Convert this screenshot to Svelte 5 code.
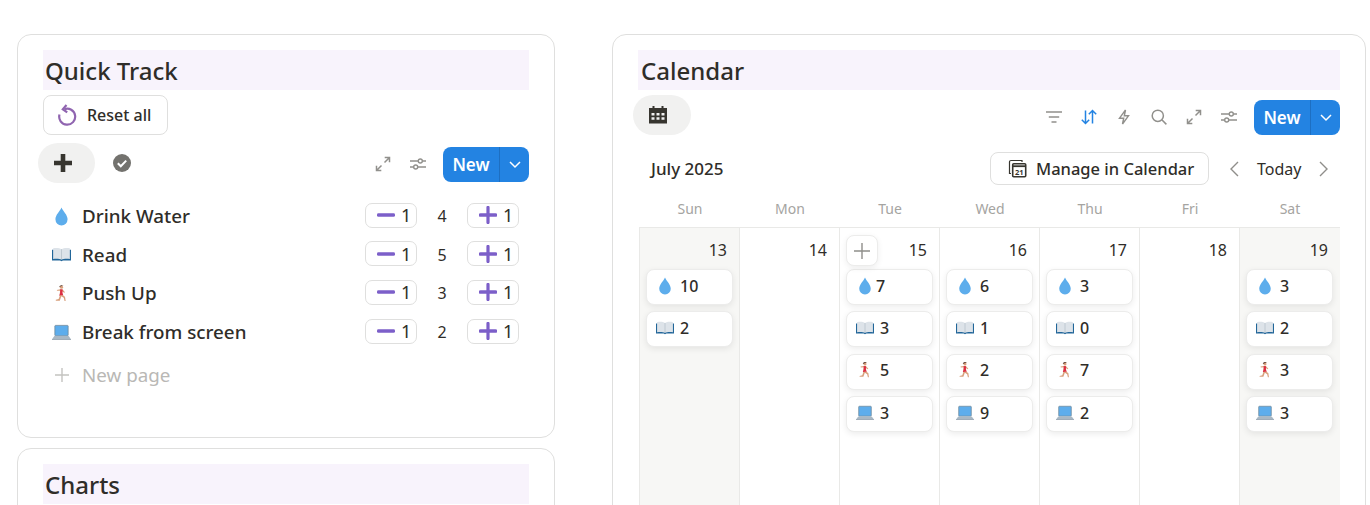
<script>
  const habits = [
    { icon: "drop", name: "Drink Water", count: 4 },
    { icon: "book", name: "Read", count: 5 },
    { icon: "runner", name: "Push Up", count: 3 },
    { icon: "laptop", name: "Break from screen", count: 2 }
  ];

  const weekdays = ["Sun", "Mon", "Tue", "Wed", "Thu", "Fri", "Sat"];

  const days = [
    { date: 13, weekend: true, items: [["drop", 10], ["book", 2]] },
    { date: 14, items: [] },
    { date: 15, add: true, items: [["drop", 7, true], ["book", 3], ["runner", 5], ["laptop", 3]] },
    { date: 16, items: [["drop", 6], ["book", 1], ["runner", 2], ["laptop", 9]] },
    { date: 17, items: [["drop", 3], ["book", 0], ["runner", 7], ["laptop", 2]] },
    { date: 18, items: [] },
    { date: 19, weekend: true, items: [["drop", 3], ["book", 2], ["runner", 3], ["laptop", 3]] }
  ];
</script>

{#snippet emoji(kind)}
  <svg class="emoji" viewBox="0 0 20 20">
    {#if kind === "drop"}
      <path d="M10 .5C8.400 4.500 3.600 8.200 3.600 13a6.400 6.400 0 0 0 12.800 0C16.400 8.200 11.600 4.500 10 .5z" fill="#5dadec" />
    {:else if kind === "book"}
      <path d="M0 5h20v11.200H11.500l-1.500.8-1.500-.8H0z" fill="#226699" />
      <path d="M1.200 3.500c3.300-.6 6.800-.4 8.800 1 2-1.400 5.500-1.600 8.800-1v11.200c-3.300-.5-6.800-.3-8.800.6-2-.9-5.500-1.100-8.800-.6z" fill="#dde3e9" />
      <path d="M10 4.500v10.800" stroke="#b4bfc8" stroke-width=".8" />
    {:else if kind === "runner"}
      <circle cx="10" cy="3.300" r="1.700" fill="#d8a07c" />
      <path d="M7.600 3.200c.2-1.800 3-2.700 4.600-1.200l-1.500-.1z" fill="#4a2c20" />
      <path d="M5 6.200l3.600-.7 2.600.2 2.500 3-1 .5-2-1.600-.3 3.400H8.200l.2-4-3 .2z" fill="#d8a07c" />
      <path d="M8.600 5.600l2.600.1-.2 3.200.9 3.400H7.600l1-3.300z" fill="#dd2e44" />
      <path d="M8.200 12.300l-1.200 3.400-3 .9v1h4.200l1.600-4.600 2.600 1.600.8 3.400h1.200l-.7-4.600-2.900-1.800z" fill="#d8a07c" />
    {:else}
      <rect x="3" y="2.500" width="14" height="11" rx=".8" fill="#5dadec" stroke="#6e8697" stroke-width=".8" />
      <path d="M2.500 13.800h15l2.500 3.400H0z" fill="#a9b8c4" />
      <path d="M0 17h20v.8H0z" fill="#8899a6" />
    {/if}
  </svg>
{/snippet}

{#snippet newButton()}
  <div class="new-btn">
    <span class="new-label">New</span>
    <span class="new-caret">
      <svg width="14" height="14" viewBox="0 0 14 14" fill="none" stroke="#fff" stroke-width="1.500"><path d="M2 5l5 5 5-5" /></svg>
    </span>
  </div>
{/snippet}

{#snippet expandIcon()}
  <svg class="tool" viewBox="0 0 16 16" fill="none" stroke="currentColor" stroke-width="1.500">
    <path d="M1.500 14.500l5-5M9.500 6.500l5-5M9.700 1.500h4.800v4.800M1.500 9.700v4.800h4.800" />
  </svg>
{/snippet}

{#snippet slidersIcon()}
  <svg class="tool" viewBox="0 0 16 16" fill="none" stroke="currentColor" stroke-width="1.400">
    <path d="M0 5h8.300M12.300 5H16M0 11h3.700M7.700 11H16" />
    <circle cx="10.300" cy="5" r="2" />
    <circle cx="5.700" cy="11" r="2" />
  </svg>
{/snippet}

<div class="page">
  <div class="left">
    <section class="card quick">
      <h2>Quick Track</h2>
      <button class="reset">
        <svg width="20" height="22" viewBox="0 0 20 22" fill="none" stroke="#9065b0" stroke-width="2.200">
          <path d="M7.400 5.200A8 8 0 1 1 2.500 10.500" />
          <path d="M9.500 1L5.800 5.200l4.400 3.200" />
        </svg>
        Reset all
      </button>
      <div class="toolbar">
        <div class="tabs">
          <span class="tab-pill">
            <svg width="18" height="18" viewBox="0 0 18 18" fill="#37352f"><path d="M6.700 0h4.600v6.700H18v4.600h-6.700V18H6.700v-6.700H0V6.700h6.700z" /></svg>
          </span>
          <svg class="check" width="18" height="18" viewBox="0 0 18 18">
            <circle cx="9" cy="9" r="9" fill="#73726e" />
            <path d="M4.800 9.200l3 3 5.400-5.600" fill="none" stroke="#fff" stroke-width="2" />
          </svg>
        </div>
        <div class="tools quick-tools">
          {@render expandIcon()}
          {@render slidersIcon()}
          {@render newButton()}
        </div>
      </div>
      <ul class="habits">
        {#each habits as habit}
          <li>
            <span class="habit-icon">{@render emoji(habit.icon)}</span>
            <span class="habit-name">{habit.name}</span>
            <span class="counter">
              <span class="step">
                <svg width="18" height="18" viewBox="0 0 18 18" fill="#7c5fc9"><rect y="7.200" width="18" height="3.600" rx="1.400" /></svg>
                1
              </span>
              <span class="count">{habit.count}</span>
              <span class="step">
                <svg width="18" height="18" viewBox="0 0 18 18" fill="#7c5fc9"><path d="M7.400 1.400a1.400 1.400 0 0 1 3.200 0v5.800h5.900a1.800 1.800 0 0 1 0 3.600h-5.900v5.800a1.600 1.600 0 0 1-3.200 0v-5.800H1.500a1.800 1.800 0 0 1 0-3.600h5.900z" /></svg>
                1
              </span>
            </span>
          </li>
        {/each}
        <li class="new-page">
          <span class="habit-icon">
            <svg width="14" height="14" viewBox="0 0 14 14" stroke="#c4c3c0" stroke-width="1.400"><path d="M7 0v14M0 7h14" /></svg>
          </span>
          <span>New page</span>
        </li>
      </ul>
    </section>
    <section class="card charts">
      <h2>Charts</h2>
    </section>
  </div>

  <section class="card calendar">
    <h2>Calendar</h2>
    <div class="cal-toolbar">
      <span class="tab-pill cal-pill">
        <svg width="18" height="18" viewBox="0 0 18 18" fill="#37352f">
          <path fill-rule="evenodd" d="M3.500 0h2v2h7V0h2v2H18v15.500H0V2h3.500zM2.500 7v2.500h3V7zm5 0v2.500h3V7zm5 0v2.500h3V7zm-10 4.200v2.600h3v-2.600zm5 0v2.600h3v-2.600zm5 0v2.600h3v-2.600z" />
        </svg>
      </span>
      <div class="tools cal-tools">
        <svg class="tool" viewBox="0 0 16 16" fill="none" stroke="currentColor" stroke-width="1.400"><path d="M0 3h16M2.800 8h10.400M5.500 13h5" /></svg>
        <svg class="tool sort" viewBox="0 0 16 16" fill="none" stroke="currentColor" stroke-width="1.500"><path d="M4.500 1.500v13M.8 10.800l3.700 3.700 3.700-3.700M11.500 14.500v-13M7.800 5.200l3.700-3.700 3.700 3.700" /></svg>
        <svg class="tool" viewBox="0 0 16 16" fill="none" stroke="currentColor" stroke-width="1.400"><path d="M9.500 1L3.500 9.200h4.200L6.500 15l6-8.200H8.300z" /></svg>
        <svg class="tool" viewBox="0 0 16 16" fill="none" stroke="currentColor" stroke-width="1.500"><circle cx="6.800" cy="6.800" r="5.600" /><path d="M10.800 10.800l4.600 4.600" /></svg>
        {@render expandIcon()}
        {@render slidersIcon()}
        {@render newButton()}
      </div>
    </div>
    <div class="month-bar">
      <span class="month">July 2025</span>
      <button class="manage">
        <svg width="19" height="19" viewBox="0 0 19 19" fill="none" stroke="#37352f">
          <path d="M3 14.500H1.500V3A1.500 1.500 0 0 1 3 1.500h11V3" stroke-width="1.200" />
          <rect x="4.700" y="4.700" width="13" height="13" rx="1" stroke-width="1.600" />
          <path d="M4.700 7.200h13" stroke-width="1.800" />
          <text x="11.200" y="15.600" class="cal-num">21</text>
        </svg>
        Manage in Calendar
      </button>
      <div class="pager">
        <svg width="10" height="16" viewBox="0 0 10 16" fill="none" stroke="#8f8e8a" stroke-width="1.400"><path d="M9 1L2 8l7 7" /></svg>
        <span class="today">Today</span>
        <svg width="10" height="16" viewBox="0 0 10 16" fill="none" stroke="#8f8e8a" stroke-width="1.400"><path d="M1 1l7 7-7 7" /></svg>
      </div>
    </div>
    <div class="weekdays">
      {#each weekdays as day}
        <span>{day}</span>
      {/each}
    </div>
    <div class="grid">
      {#each days as day}
        <div class="cell" class:weekend={day.weekend}>
          <div class="cell-head">
            {#if day.add}
              <span class="add">
                <svg width="16" height="16" viewBox="0 0 16 16" stroke="#8f8e8a" stroke-width="1.400"><path d="M8 0v16M0 8h16" /></svg>
              </span>
            {/if}
            <span class="date">{day.date}</span>
          </div>
          {#each day.items as item}
            <div class="entry">
              <span class="entry-icon">{@render emoji(item[0])}</span>
              <span class="entry-num" class:tight={item[2]}>{item[1]}</span>
            </div>
          {/each}
        </div>
      {/each}
    </div>
  </section>
</div>

<style>
  :global(body) {
    background: #fff;
    overflow: hidden;
  }

  .page {
    display: flex;
    align-items: flex-start;
    gap: 57px;
    height: 505px;
    padding: 34px 0 0 17px;
    box-sizing: border-box;
    overflow: hidden;
    font-family: "Noto Sans", Inter, sans-serif;
    color: #2f2d29;
  }

  .left {
    width: 538px;
    flex: none;
    display: flex;
    flex-direction: column;
    gap: 10px;
  }

  .card {
    border: 1px solid #dfdfde;
    border-radius: 14px;
    background: #fff;
    box-sizing: border-box;
  }

  h2 {
    margin: 0;
    height: 40px;
    background: #f8f3fc;
    padding: 0 2px;
    font-size: 24px;
    font-weight: 500;
    line-height: 42px;
  }

  .calendar h2 {
    padding-left: 3px;
  }

  .quick {
    height: 404px;
    padding: 15px 25px 0;
  }

  .charts {
    height: 120px;
    padding: 15px 25px 0;
  }

  button {
    font-family: inherit;
    color: inherit;
    background: #fff;
    border: 1px solid #dfdfde;
    border-radius: 8px;
    display: flex;
    align-items: center;
    box-sizing: border-box;
  }

  .reset {
    margin-top: 5px;
    width: 125px;
    height: 40px;
    padding: 0 0 0 13px;
    gap: 10px;
    font-size: 16px;
    font-weight: 500;
  }

  .toolbar {
    display: flex;
    justify-content: space-between;
    align-items: center;
    margin: 8px 0 0 -5px;
    height: 40px;
  }

  .tabs {
    display: flex;
    align-items: center;
    gap: 18px;
  }

  .tab-pill {
    width: 57px;
    height: 40px;
    border-radius: 20px;
    background: #f1f1f0;
    display: flex;
    align-items: center;
    padding-left: 16px;
    box-sizing: border-box;
  }

  .tools {
    display: flex;
    align-items: center;
    gap: 19px;
    padding-top: 1px;
  }

  .quick-tools {
    padding-top: 2px;
  }

  .tool {
    width: 16px;
    height: 16px;
    color: #91908c;
    flex: none;
  }

  .tool.sort {
    color: #2383e2;
  }

  .new-btn {
    width: 86px;
    height: 35px;
    display: flex;
    border-radius: 8px;
    background: #2383e2;
    color: #fff;
    margin-left: -2px;
    font-size: 17px;
    font-weight: 600;
  }

  .new-label {
    width: 56px;
    text-align: center;
    line-height: 35px;
    border-right: 1px solid #1d6fc2;
  }

  .new-caret {
    flex: 1;
    display: flex;
    align-items: center;
    justify-content: center;
  }

  .habits {
    list-style: none;
    margin: 14px 0 0;
    padding: 0;
  }

  .habits li {
    display: flex;
    align-items: center;
    height: 38.6px;
    font-size: 18.8px;
    font-weight: 500;
  }

  .habit-icon {
    width: 39px;
    flex: none;
    padding-left: 9px;
    box-sizing: border-box;
    display: flex;
    align-items: center;
  }

  .habit-icon :global(.emoji) {
    width: 19px;
    height: 19px;
  }

  .habit-name {
    flex: 1;
  }

  .counter {
    display: flex;
    align-items: center;
    margin-right: 10px;
    font-size: 16px;
    font-weight: 400;
  }

  .step {
    width: 52px;
    height: 25px;
    margin-bottom: 2px;
    border: 1px solid #dfdfde;
    border-radius: 7px;
    box-sizing: border-box;
    display: flex;
    align-items: center;
    padding-left: 11px;
    gap: 6px;
    font-size: 18px;
  }

  .count {
    width: 50px;
    text-align: center;
  }

  .new-page {
    margin-top: 4px;
    color: #b9b8b5;
    font-weight: 400 !important;
  }

  .new-page .habit-icon {
    padding-left: 12px;
  }

  .emoji {
    width: 20px;
    height: 20px;
    display: block;
  }

  .calendar {
    width: 754px;
    height: 500px;
    flex: none;
    padding: 15px 25px 0;
  }

  .cal-toolbar {
    display: flex;
    justify-content: space-between;
    align-items: center;
    margin: 5px 0 0 -5px;
    height: 40px;
  }

  .cal-pill {
    width: 58px;
    padding-left: 16px;
  }

  .cal-tools {
    margin-top: 3px;
  }

  .month-bar {
    display: flex;
    align-items: center;
    margin-top: 15px;
    padding-left: 12px;
    height: 37px;
  }

  .month {
    font-size: 17px;
    font-weight: 500;
    width: 340px;
    padding-left: 1px;
    box-sizing: border-box;
  }

  .manage {
    width: 219px;
    height: 33px;
    padding: 0 0 0 17px;
    gap: 9px;
    font-size: 16.5px;
    font-weight: 500;
  }

  .cal-num {
    font-size: 7.5px;
    font-weight: 700;
    text-anchor: middle;
    fill: #37352f;
    stroke: none;
  }

  .pager {
    margin-left: 20px;
    display: flex;
    align-items: center;
    gap: 18px;
  }

  .today {
    font-size: 16px;
  }

  .weekdays {
    display: grid;
    grid-template-columns: repeat(7, 100px);
    height: 38px;
    align-items: center;
    margin: 2px 0 0 2px;
    font-size: 14px;
    color: #a5a4a1;
    text-align: center;
  }

  .grid {
    display: grid;
    grid-template-columns: repeat(7, 100px);
    height: 300px;
    margin-left: 1px;
    border-top: 1px solid #e9e9e7;
    border-left: 1px solid #e9e9e7;
    border-right: 1px solid #e9e9e7;
    width: 701px;
    box-sizing: border-box;
  }

  .cell {
    border-right: 1px solid #e9e9e7;
    padding: 0 6px;
    box-sizing: border-box;
  }

  .cell:last-child {
    border-right: 0;
  }

  .weekend {
    background: #f7f7f5;
  }

  .cell-head {
    height: 41px;
    display: flex;
    align-items: center;
    justify-content: flex-end;
    position: relative;
    padding: 2px 6px 0 0;
    box-sizing: border-box;
    font-size: 16px;
  }

  .add {
    position: absolute;
    left: 0;
    top: 7px;
    width: 32px;
    height: 31px;
    border: 1px solid #ececeb;
    border-radius: 8px;
    background: #fff;
    box-shadow: 0 2px 6px rgba(15, 15, 15, 0.07);
    box-sizing: border-box;
    display: flex;
    align-items: center;
    justify-content: center;
  }

  .entry {
    width: 87px;
    height: 36px;
    margin-bottom: 6.4px;
    border: 1px solid #ececeb;
    border-radius: 8px;
    background: #fff;
    box-shadow: 0 2px 6px rgba(15, 15, 15, 0.08);
    display: flex;
    align-items: center;
    padding: 0 0 3px 9px;
    box-sizing: border-box;
    font-size: 16px;
    font-weight: 500;
  }

  .entry-icon {
    width: 24px;
    flex: none;
  }

  .entry :global(.emoji) {
    width: 18px;
    height: 18px;
  }

  .entry-num.tight {
    margin-left: -4px;
  }
</style>
